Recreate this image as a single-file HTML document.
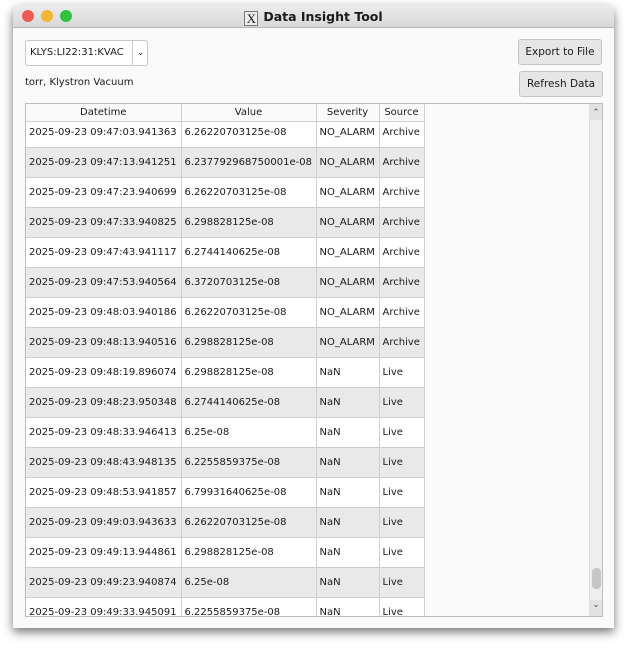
<!DOCTYPE html>
<html><head><style>
body{margin:0;width:628px;height:650px;background:#fff;font-family:"DejaVu Sans","Liberation Sans",sans-serif;font-size:10px;color:#1a1a1a;position:relative;overflow:hidden}
.win{position:absolute;left:13px;top:5px;width:601px;height:623px;background:#fafafa;border-radius:8px 8px 0 0;box-shadow:0 4px 10px rgba(0,0,0,.55);overflow:hidden}
.tb{height:22px;background:linear-gradient(#ececec,#d8d8d8);border-bottom:1px solid #b8b8b8;text-align:center;font-weight:bold;font-size:12.5px;line-height:23px;position:relative}
.dot{position:absolute;top:5px;width:12px;height:12px;border-radius:50%}
.x{display:inline-block;width:12px;height:13px;border:1px solid #777;background:#eee;font-family:"Liberation Serif",serif;font-weight:normal;font-size:13px;line-height:13px;vertical-align:-2px;margin-right:5px}
.combo{position:absolute;left:12px;top:35px;width:121px;height:24px;border:1px solid #c8c8c8;border-radius:3px;background:#fff;line-height:24px}
.btn{position:absolute;width:82px;height:24px;border:1px solid #c4c4c4;border-radius:3px;background:#e6e6e6;text-align:center;line-height:24px;font-size:10.5px}
.tbl{position:absolute;left:12px;top:98px;width:576px;height:512px;border:1px solid #bdbdbd;background:#fafafa;overflow:hidden}
table{border-collapse:collapse;position:absolute;left:0;top:0;table-layout:fixed;width:398px}
td,th{border:1px solid #cfcfcf;padding:0 3px;white-space:nowrap;overflow:hidden;font-weight:normal;text-align:left;height:29px;box-sizing:border-box}
tr{height:30px}
th{height:17px;text-align:center;background:#fafafa;border-top:none}
tr.h{height:17px}
tr.f{height:26px}
tr.f td{height:26px;padding-bottom:4px}
tr.g td{background:#e9e9e9}
tr td{background:#fff}
td:first-child,th:first-child{border-left:none}
.sb{position:absolute;right:0;top:0;width:12px;height:512px;background:#eeeeee;border-left:1px solid #ddd}
</style></head><body>
<div class="win">
<div class="tb"><span class="dot" style="left:9px;background:#ee5a52"></span><span class="dot" style="left:28px;background:#f3b634"></span><span class="dot" style="left:47px;background:#2fc13f"></span><span class="x">X</span>Data Insight Tool</div>
<div class="combo"><span style="padding-left:4px">KLYS:LI22:31:KVAC</span><span style="position:absolute;left:106px;top:0;width:15px;height:24px;border-left:1px solid #c8c8c8;text-align:center;font-size:9px">&#8964;</span></div>
<div style="position:absolute;left:12px;top:72px">torr, Klystron Vacuum</div>
<div class="btn" style="left:505px;top:34px">Export to File</div>
<div class="btn" style="left:506px;top:66px">Refresh Data</div>
<div class="tbl">
<table>
<colgroup><col style="width:155px"><col style="width:135px"><col style="width:63px"><col style="width:45px"></colgroup>
<tr class="h"><th>Datetime</th><th>Value</th><th>Severity</th><th>Source</th></tr>
<tr class="f"><td>2025-09-23 09:47:03.941363</td><td>6.26220703125e-08</td><td>NO_ALARM</td><td>Archive</td></tr>
<tr class="g"><td>2025-09-23 09:47:13.941251</td><td>6.237792968750001e-08</td><td>NO_ALARM</td><td>Archive</td></tr>
<tr><td>2025-09-23 09:47:23.940699</td><td>6.26220703125e-08</td><td>NO_ALARM</td><td>Archive</td></tr>
<tr class="g"><td>2025-09-23 09:47:33.940825</td><td>6.298828125e-08</td><td>NO_ALARM</td><td>Archive</td></tr>
<tr><td>2025-09-23 09:47:43.941117</td><td>6.2744140625e-08</td><td>NO_ALARM</td><td>Archive</td></tr>
<tr class="g"><td>2025-09-23 09:47:53.940564</td><td>6.3720703125e-08</td><td>NO_ALARM</td><td>Archive</td></tr>
<tr><td>2025-09-23 09:48:03.940186</td><td>6.26220703125e-08</td><td>NO_ALARM</td><td>Archive</td></tr>
<tr class="g"><td>2025-09-23 09:48:13.940516</td><td>6.298828125e-08</td><td>NO_ALARM</td><td>Archive</td></tr>
<tr><td>2025-09-23 09:48:19.896074</td><td>6.298828125e-08</td><td>NaN</td><td>Live</td></tr>
<tr class="g"><td>2025-09-23 09:48:23.950348</td><td>6.2744140625e-08</td><td>NaN</td><td>Live</td></tr>
<tr><td>2025-09-23 09:48:33.946413</td><td>6.25e-08</td><td>NaN</td><td>Live</td></tr>
<tr class="g"><td>2025-09-23 09:48:43.948135</td><td>6.2255859375e-08</td><td>NaN</td><td>Live</td></tr>
<tr><td>2025-09-23 09:48:53.941857</td><td>6.79931640625e-08</td><td>NaN</td><td>Live</td></tr>
<tr class="g"><td>2025-09-23 09:49:03.943633</td><td>6.26220703125e-08</td><td>NaN</td><td>Live</td></tr>
<tr><td>2025-09-23 09:49:13.944861</td><td>6.298828125e-08</td><td>NaN</td><td>Live</td></tr>
<tr class="g"><td>2025-09-23 09:49:23.940874</td><td>6.25e-08</td><td>NaN</td><td>Live</td></tr>
<tr><td>2025-09-23 09:49:33.945091</td><td>6.2255859375e-08</td><td>NaN</td><td>Live</td></tr>
</table>
<div class="sb">
<div style="height:16px;text-align:center;font-size:9px;color:#555;line-height:18px;background:#e2e2e2">&#8963;</div>
<div style="position:absolute;left:2px;top:464px;width:9px;height:21px;border-radius:4px;background:#c6c6c6"></div>
<div style="position:absolute;bottom:0;width:12px;height:16px;text-align:center;font-size:9px;color:#555;background:#e2e2e2">&#8964;</div>
</div>
</div>
</div>
</body></html>
